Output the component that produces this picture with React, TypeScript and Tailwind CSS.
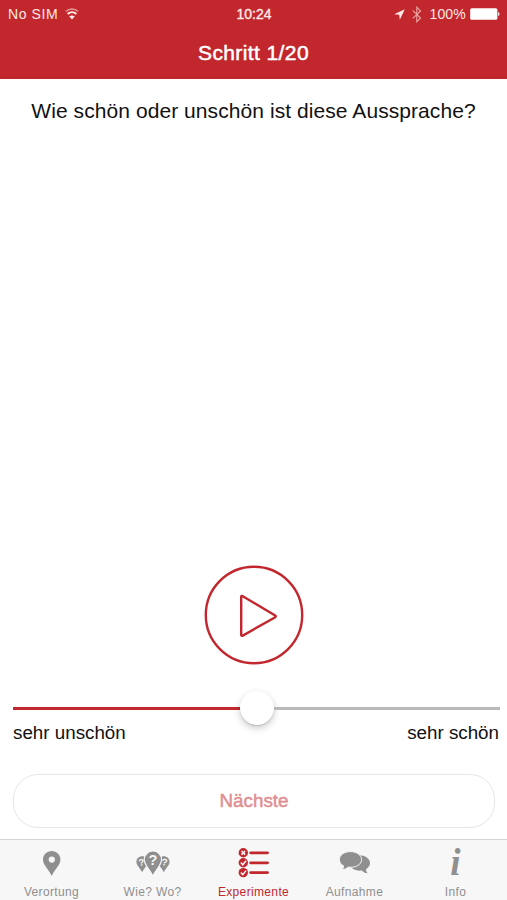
import { useState } from 'react';
import type { ReactNode } from 'react';

interface Tab {
  id: string;
  label: string;
  icon: ReactNode;
}

const PIN = 'M8.7 0C3.9 0 0 3.8 0 8.6c0 5.6 5.2 9.2 8.7 16.4 3.5-7.2 8.7-10.8 8.7-16.4C17.4 3.8 13.5 0 8.7 0z';

function WifiIcon() {
  return (
    <svg width="14" height="12" viewBox="0 0 14 12" fill="none" stroke="currentColor">
      <path d="M0.8 3.4C4.3 0.2 9.7 0.2 13.2 3.4" strokeWidth="1.3" opacity="0.6" />
      <path d="M2.6 6C5.2 3.6 8.8 3.6 11.4 6" strokeWidth="2.1" />
      <path d="M7 11.6L4.2 8.6C5.8 7.1 8.2 7.1 9.8 8.6z" fill="currentColor" stroke="none" />
    </svg>
  );
}

function LocationIcon() {
  return (
    <svg width="11" height="11" viewBox="0 0 11 11" fill="currentColor">
      <path d="M10.8 0.2L0.2 5.2L5.2 5.8L5.8 10.8z" />
    </svg>
  );
}

function BluetoothIcon() {
  return (
    <svg width="10" height="17" viewBox="0 0 10 17" fill="none" stroke="currentColor" strokeWidth="1.1" opacity="0.65">
      <path d="M0.8 4.6L8.6 12L4.8 15.8V1.2L8.6 5L0.8 12.4" />
    </svg>
  );
}

function BatteryIcon() {
  return (
    <svg width="30" height="12" viewBox="0 0 30 12" fill="#fff">
      <rect x="0.2" y="0.2" width="27.2" height="11.6" rx="1.6" />
      <path d="M28.200 4c1.700 0.300 1.700 3.700 0 4z" />
    </svg>
  );
}

function PinIcon() {
  return (
    <svg width="18" height="25" viewBox="0 0 18 25" fill="currentColor">
      <path d={PIN} />
      <circle cx="8.8" cy="8.6" r="3.1" fill="#f7f7f7" />
    </svg>
  );
}

function PinsIcon() {
  return (
    <svg width="34" height="25" viewBox="0 0 34 25" fill="currentColor" className="font-bold">
      <g transform="translate(0.4 5.2) scale(0.66 0.64)">
        <path d={PIN} />
      </g>
      <g transform="translate(22.100 5.200) scale(0.660 0.640)">
        <path d={PIN} />
      </g>
      <path d={PIN} transform="translate(8.2 0)" stroke="#f7f7f7" strokeWidth="1.2" />
      <g fill="#f7f7f7" textAnchor="middle">
        <text x="16.9" y="14" fontSize="14.5">?</text>
        <text x="5.4" y="14.6" fontSize="9.5" transform="rotate(-8 5 11)">?</text>
        <text x="28.6" y="14.6" fontSize="9.5" transform="rotate(8 29 11)">?</text>
      </g>
    </svg>
  );
}

function ChecklistIcon() {
  return (
    <svg width="32" height="30" viewBox="0 0 32 30" fill="none" stroke="currentColor">
      {[4.8, 14.8, 24.6].map(y => (
        <g key={y}>
          <circle cx="5.3" cy={y} r="4.7" fill="currentColor" stroke="none" />
          <path d={`M12.6 ${y}H29.6`} strokeWidth="2.7" strokeLinecap="round" />
        </g>
      ))}
      <g stroke="#f7f7f7" strokeWidth="1.5">
        <path d="M3.5 3L7.1 6.6M7.1 3L3.5 6.6" />
        <path d="M2.8 14.6L4.8 16.8L8 12.8" />
        <path d="M2.8 24.4L4.8 26.6L8 22.6" />
      </g>
    </svg>
  );
}

function BubblesIcon() {
  return (
    <svg width="32" height="24" viewBox="0 0 32 24" fill="currentColor">
      <path d="M20 4.200c6.200 0 11 3.400 11 7.900 0 2.700-1.600 4.800-4 6.200 0 1.600 0.700 2.900 1.800 4-2.600-0.200-4.600-1.300-6-2.800-6.200 0.800-12.400-2-12.400-7.400z" />
      <path
        d="M11.400 0.600C5.200 0.600 0.400 4.100 0.400 8.600c0 2.800 1.700 5 4.300 6.400-0.100 1.500-0.800 2.700-1.700 3.700 2.700-0.200 4.900-1.200 6.200-2.600 7.400 1.100 13.400-2.600 13.400-7.500 0-4.500-5-8-11.200-8z"
        stroke="#f7f7f7"
        strokeWidth="1"
      />
    </svg>
  );
}

function InfoIcon() {
  return (
    <span className="font-['Liberation_Serif',serif] text-[37px] leading-[46px] font-bold italic">i</span>
  );
}

const TABS: Tab[] = [
  { id: 'verortung', label: 'Verortung', icon: <PinIcon /> },
  { id: 'wiewo', label: 'Wie? Wo?', icon: <PinsIcon /> },
  { id: 'experimente', label: 'Experimente', icon: <ChecklistIcon /> },
  { id: 'aufnahme', label: 'Aufnahme', icon: <BubblesIcon /> },
  { id: 'info', label: 'Info', icon: <InfoIcon /> },
];

export default function App() {
  const [activeTab, setActiveTab] = useState('experimente');
  const [value] = useState(50);

  return (
    <div className="flex h-[900px] w-[507px] flex-col overflow-hidden bg-white font-['Liberation_Sans',Arial,sans-serif] text-[#111]">
      {/* Header */}
      <header className="h-[79px] shrink-0 bg-[#c1272d] text-white">
        <div className="grid h-7 grid-cols-3 items-center pl-2 pr-[7px] text-[14px] text-[#ffe9e6]">
          <div className="flex items-center gap-[7px]">
            <span className="tracking-[0.6px]">No SIM</span>
            <WifiIcon />
          </div>
          <span className="text-center [-webkit-text-stroke:0.4px]">10:24</span>
          <div className="flex items-center justify-end">
            <LocationIcon />
            <span className="ml-[7px] mr-[7px]"><BluetoothIcon /></span>
            <span className="mr-[4px] tracking-[0.2px]">100%</span>
            <BatteryIcon />
          </div>
        </div>
        <h1 className="pt-[9px] text-center text-[21px] leading-8 tracking-[0.4px] [-webkit-text-stroke:0.5px]">Schritt 1/20</h1>
      </header>

      {/* Question */}
      <main className="flex flex-1 flex-col">
        <p className="pt-[18px] text-center text-[21px] leading-7 tracking-[0.07px]">
          Wie schön oder unschön ist diese Aussprache?
        </p>

        <button className="mx-auto mt-auto h-[100px] w-[100px]" aria-label="Play">
          <svg width="100" height="100" viewBox="0 0 100 100" fill="none" stroke="#c1272d" strokeWidth="2.4">
            <circle cx="50" cy="50" r="48.2" />
            <path d="M37.200 31.800V69.800Q37.200 71.400 38.800 70.600L71.200 52.200Q72.400 51.200 71.200 50.400L38.800 31.200Q37.200 30.400 37.200 31.800z" />
          </svg>
        </button>

        {/* Slider */}
        <div className="mt-[26px] pl-[13px] pr-[7px]">
          <div className="flex h-[35px] items-center">
            <div className="h-[3px] bg-[#c3282e]" style={{ width: `calc(${value}% - 16.5px)` }} />
            <div className="-mt-[1px] h-[34px] w-[34px] shrink-0 rounded-full bg-white shadow-[0_3px_7px_rgba(0,0,0,0.22),0_1px_1px_rgba(0,0,0,0.12)]" />
            <div className="h-[3px] flex-1 bg-[#b9b9b9]" />
          </div>
          <div className="-mt-[6px] flex justify-between pr-[1px] text-[18.8px] leading-[26px]">
            <span>sehr unschön</span>
            <span>sehr schön</span>
          </div>
        </div>

        <button className="mb-[11px] ml-[13px] mr-3 mt-[28px] h-[54px] rounded-[25px] border border-[#e6e6e8] pt-[1px] text-[18.8px] text-[#df8f92] [-webkit-text-stroke:0.5px]">
          Nächste
        </button>
      </main>

      {/* Tab bar */}
      <nav className="grid h-[61px] shrink-0 grid-cols-5 border-t border-[#d4d4d4] bg-[#f7f7f7] px-[1px]">
        {TABS.map(tab => (
          <button
            key={tab.id}
            onClick={() => setActiveTab(tab.id)}
            className={`flex flex-col items-center ${tab.id === activeTab ? 'text-[#c1272d]' : 'text-[#8f8f8f]'}`}
          >
            <span className="flex h-[46px] items-center">{tab.icon}</span>
            <span className="-mt-[2px] text-[12px] leading-4 tracking-[0.35px]">{tab.label}</span>
          </button>
        ))}
      </nav>
    </div>
  );
}
